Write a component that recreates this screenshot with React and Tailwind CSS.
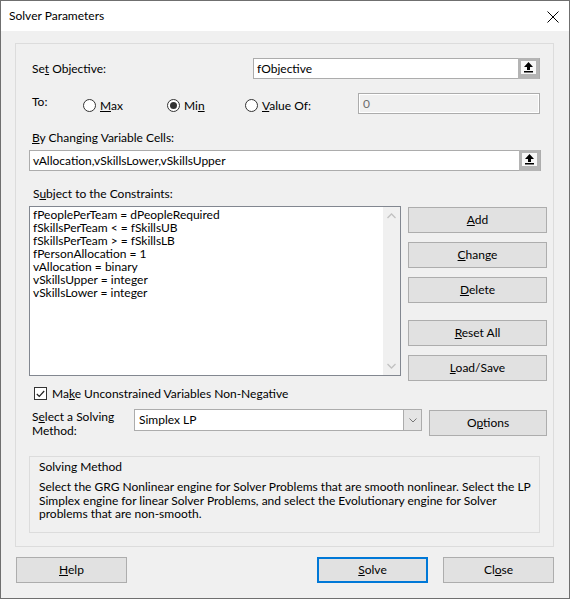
import React from "react";

const F = { fontFamily: 'Lato, "Noto Sans", Arial, sans-serif' };

function RefBtn() {
  return (
    <div className="w-[21px] h-[21px] bg-[#b4b4b4] flex items-start justify-center pt-[3px] shrink-0">
      <div className="w-[15px] h-[13px] bg-[#f7f7f7] flex items-center justify-center">
        <svg width="9" height="11" viewBox="0 0 9 11">
          <path d="M4.5 0 L9 5 L6 5 L6 8 L3 8 L3 5 L0 5 Z" fill="#000" />
          <rect x="0" y="9" width="9" height="1.5" fill="#000" />
        </svg>
      </div>
    </div>
  );
}

function Radio({ checked, children, className = "" }) {
  return (
    <div className={"flex items-center mt-[4px] " + className}>
      <div className="w-[13px] h-[13px] rounded-full border border-[#333] bg-white flex items-center justify-center">
        {checked && <div className="w-[7px] h-[7px] rounded-full bg-[#333]" />}
      </div>
      <span className="ml-[4px]">{children}</span>
    </div>
  );
}

function Btn({ children, className = "" }) {
  return (
    <div
      className={
        "h-[26px] border border-[#adadad] bg-[#e1e1e1] flex items-center justify-center " +
        className
      }
    >
      {children}
    </div>
  );
}

export default function App() {
  const constraints = [
    "fPeoplePerTeam = dPeopleRequired",
    "fSkillsPerTeam < = fSkillsUB",
    "fSkillsPerTeam > = fSkillsLB",
    "fPersonAllocation = 1",
    "vAllocation = binary",
    "vSkillsUpper = integer",
    "vSkillsLower = integer",
  ];
  return (
    <div
      style={F}
      className="w-[570px] h-[599px] border border-[#6f6f6f] bg-[#f0f0f0] text-[12px] text-black flex flex-col overflow-hidden leading-[16px]"
    >
      {/* Title bar */}
      <div className="h-[30px] bg-white flex items-center justify-between pl-[8px] pr-[10px] shrink-0">
        <span className="text-[12px]">Solver Parameters</span>
        <svg width="12" height="12" viewBox="0 0 12 12" className="mt-[1px]">
          <path d="M0.5 0.5 L11.5 11.5 M11.5 0.5 L0.5 11.5" stroke="#000" strokeWidth="1" />
        </svg>
      </div>

      {/* Body */}
      <div className="flex-1 flex flex-col pl-[14px] pr-[15px] pt-[12px]">
        {/* Panel */}
        <div className="h-[504px] border border-[#dcdcdc] flex flex-col pl-[13px]">
          {/* Objective */}
          <div className="mt-[14px] h-[21px] flex items-center">
            <span className="ml-[3px] w-[221px]">
              Se<u>t</u> Objective:
            </span>
            <div className="w-[287px] h-[21px] border border-[#acacac] bg-white flex items-center justify-between">
              <span className="pl-[3px]">fObjective</span>
              <RefBtn />
            </div>
          </div>

          {/* To row */}
          <div className="mt-[14px] h-[21px] flex items-center">
            <span className="ml-[3px] w-[51px] -mt-[4px]">To:</span>
            <Radio className="w-[84px]">
              <u>M</u>ax
            </Radio>
            <Radio checked className="w-[78px]">
              Mi<u>n</u>
            </Radio>
            <Radio className="w-[113px]">
              <u>V</u>alue Of:
            </Radio>
            <div className="w-[182px] h-[21px] border border-[#acacac] bg-white p-[1px]">
              <div className="h-full bg-[#f0f0f0] text-[#6d6d6d] pl-[3px] flex items-center">0</div>
            </div>
          </div>

          {/* By changing */}
          <div className="mt-[16px] ml-[3px] h-[16px] flex items-center">
            <span>
              <u>B</u>y Changing Variable Cells:
            </span>
          </div>
          <div className="mt-[4px] w-[512px] h-[21px] border border-[#acacac] bg-white flex items-center justify-between">
            <span className="pl-[3px]">vAllocation,vSkillsLower,vSkillsUpper</span>
            <RefBtn />
          </div>

          {/* Subject to */}
          <div className="mt-[15px] ml-[4px] h-[16px] flex items-center">
            <span>
              S<u>u</u>bject to the Constraints:
            </span>
          </div>
          <div className="mt-[4px] flex items-start">
            <div className="w-[372px] h-[170px] border border-[#828790] bg-white flex">
              <div className="flex-1 pl-[3px] pt-[1px] leading-[13px] text-[12px]">
                {constraints.map((c) => (
                  <div key={c} className="h-[13px] whitespace-pre">
                    {c}
                  </div>
                ))}
              </div>
              <div className="w-[17px] bg-[#f0f0f0] flex flex-col items-center justify-between py-[6px]">
                <svg width="9" height="6" viewBox="0 0 9 6">
                  <path d="M0.5 5 L4.5 1 L8.5 5" stroke="#c2c2c2" strokeWidth="1.3" fill="none" />
                </svg>
                <svg width="9" height="6" viewBox="0 0 9 6">
                  <path d="M0.5 1 L4.5 5 L8.5 1" stroke="#c2c2c2" strokeWidth="1.3" fill="none" />
                </svg>
              </div>
            </div>
            <div className="ml-[7px] w-[139px] flex flex-col mt-[1px]">
              <Btn>
                <span>
                  <u>A</u>dd
                </span>
              </Btn>
              <Btn className="mt-[9px]">
                <span>
                  <u>C</u>hange
                </span>
              </Btn>
              <Btn className="mt-[9px]">
                <span>
                  <u>D</u>elete
                </span>
              </Btn>
              <Btn className="mt-[17px]">
                <span>
                  <u>R</u>eset All
                </span>
              </Btn>
              <Btn className="mt-[9px]">
                <span>
                  <u>L</u>oad/Save
                </span>
              </Btn>
            </div>
          </div>

          {/* Checkbox */}
          <div className="mt-[6px] ml-[5px] flex items-center h-[13px]">
            <div className="w-[13px] h-[13px] border border-[#333] bg-white flex items-center justify-center">
              <svg width="9" height="8" viewBox="0 0 9 8">
                <path d="M0.8 4 L3.3 6.5 L8.2 1" stroke="#222" strokeWidth="1.2" fill="none" />
              </svg>
            </div>
            <span className="ml-[5px]">
              Ma<u>k</u>e Unconstrained Variables Non-Negative
            </span>
          </div>

          {/* Select method */}
          <div className="mt-[9px] flex items-start">
            <div className="ml-[3px] w-[102px] leading-[14px] mt-[1px]">
              S<u>e</u>lect a Solving
              <br />
              Method:
            </div>
            <div className="w-[288px] h-[22px] border border-[#acacac] bg-white flex items-center justify-between">
              <span className="pl-[4px]">Simplex LP</span>
              <div className="w-[18px] h-full bg-[#e5e5e5] border-l border-[#acacac] flex items-center justify-center">
                <svg width="8" height="5" viewBox="0 0 8 5">
                  <path d="M0.5 0.5 L4 4 L7.5 0.5" stroke="#777" strokeWidth="1" fill="none" />
                </svg>
              </div>
            </div>
            <Btn className="ml-[7px] w-[118px] mt-[1px]">
              <span>
                O<u>p</u>tions
              </span>
            </Btn>
          </div>

          {/* Group box */}
          <div className="mt-[18px] w-[511px] h-[77px] border border-[#dcdcdc] pl-[9px] pt-[2px]">
            <div className="h-[16px]">Solving Method</div>
            <div className="mt-[5px] leading-[13.5px] pr-[4px]">
              Select the GRG Nonlinear engine for Solver Problems that are smooth nonlinear. Select the LP
              Simplex engine for linear Solver Problems, and select the Evolutionary engine for Solver
              problems that are non-smooth.
            </div>
          </div>
        </div>

        {/* Bottom buttons */}
        <div className="mt-[10px] flex items-center">
          <Btn className="w-[111px] ml-[1px]">
            <span>
              <u>H</u>elp
            </span>
          </Btn>
          <div className="w-[190px]" />
          <div className="w-[111px] h-[26px] border-2 border-[#0078d7] bg-[#e1e1e1] flex items-center justify-center">
            <span>
              <u>S</u>olve
            </span>
          </div>
          <Btn className="w-[111px] ml-[15px]">
            <span>
              Cl<u>o</u>se
            </span>
          </Btn>
        </div>
      </div>
    </div>
  );
}
